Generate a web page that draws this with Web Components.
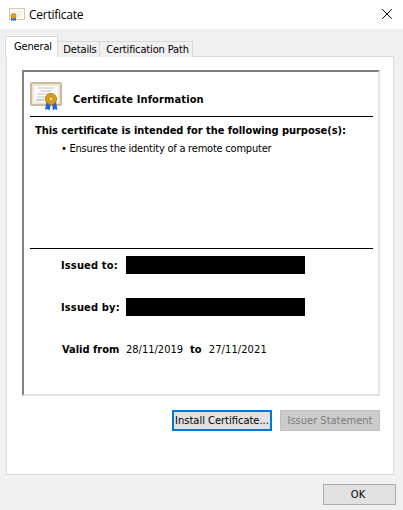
<!DOCTYPE html>
<html>
<head>
<meta charset="utf-8">
<title>Certificate</title>
<style>
    html, body { margin: 0; padding: 0; background: #fff; }
    body { font: 12px "Noto Sans", sans-serif; color: #000; }
</style>
</head>
<body>
<cert-dialog>
    <cert-title slot="title">Certificate</cert-title>
    <cert-tab slot="tabs" active style="--tab-width: 53px">General</cert-tab>
    <cert-tab slot="tabs" style="--tab-width: 43px">Details</cert-tab>
    <cert-tab slot="tabs" style="--tab-width: 94px">Certification Path</cert-tab>
    <cert-info slot="panel"></cert-info>
    <win-button slot="actions" focused>Install Certificate...</win-button>
    <win-button slot="actions" disabled>Issuer Statement</win-button>
    <win-button slot="footer" ok>OK</win-button>
</cert-dialog>

<script>
const certIcon = (w, h) => `
    <svg width="${w}" height="${h}" viewBox="0 0 32 30" fill="none">
        <rect x="1" y="1" width="30" height="22" rx="1" fill="#f7f4ec" stroke="#cdbb9b" stroke-width="2"/>
        <rect x="3" y="3" width="26" height="18" fill="#fbfaf6" stroke="#e3d8c2"/>
        <path d="M8 6h16M10 9h12M7 12h13M7 15h9" stroke="#c3c6d0"/>
        <path d="M6 18h8" stroke="#9aa0b4"/>
        <path d="M16.5 20L15 28l2.5-1 2 1.5 1.5-7zM22 21.5l1 7 2-1.5 2.5 1-1.5-8z" fill="#1f63d6"/>
        <circle cx="21" cy="17" r="5.5" fill="#dd9f1c" stroke="#b27a14"/>
        <circle cx="21" cy="17" r="2.5" fill="#f3c95c" stroke="#bd8518"/>
    </svg>`;

class CertDialog extends HTMLElement {
    constructor() {
        super();
        this.attachShadow({ mode: "open" }).innerHTML = `
        <style>
            :host { display: block; width: 403px; height: 510px; overflow: hidden; }
            .body {
                height: 481px;
                box-sizing: border-box;
                background: #f0f0f0;
                padding: 7px 9px 0 6px;
                display: flex;
                flex-direction: column;
            }
            .tabs { display: flex; align-items: flex-end; height: 21px; position: relative; z-index: 1; }
            .panel {
                height: 419px;
                margin-top: -1px;
                box-sizing: border-box;
                background: #fff;
                border: 1px solid #d9d9d9;
                padding: 13px 13px 0 15px;
                display: flex;
                flex-direction: column;
            }
            .actions { display: flex; justify-content: flex-end; gap: 8px; margin-top: 14px; }
            .footer { display: flex; justify-content: flex-end; margin: 9px -2px 0 0; }
        </style>
        <slot name="title"></slot>
        <div class="body">
            <div class="tabs"><slot name="tabs"></slot></div>
            <div class="panel">
                <slot name="panel"></slot>
                <div class="actions"><slot name="actions"></slot></div>
            </div>
            <div class="footer"><slot name="footer"></slot></div>
        </div>`;
    }
}

class CertTitle extends HTMLElement {
    constructor() {
        super();
        this.attachShadow({ mode: "open" }).innerHTML = `
        <style>
            :host {
                display: flex;
                align-items: center;
                height: 29px;
                padding: 0 11px 0 9px;
                box-sizing: border-box;
                font: 12px "Open Sans", sans-serif;
                letter-spacing: -.25px;
                color: #000;
            }
            .name { margin-left: 4px; flex: 1; }
            .close { margin-top: -1px; }
        </style>
        <svg width="16" height="16" viewBox="0 0 16 16" fill="none">
            <rect x="0.5" y="1.5" width="15" height="11" fill="#fbf9f4" stroke="#d8c7a8"/>
            <path d="M8 5h5M8 8h5" stroke="#e4e4ea"/>
            <path d="M2 10.5v3.5l1.5-1 1 1 1-1 1.5 1v-3.5z" fill="#1f63d6"/>
            <circle cx="4.5" cy="9" r="2.6" fill="#dca327" stroke="#b5811c" stroke-width=".8"/>
        </svg>
        <span class="name"><slot></slot></span>
        <svg class="close" width="10" height="10" viewBox="0 0 10 10" stroke="#000" stroke-width="1"><path d="M.3.3l9.4 9.4M9.7.3L.3 9.7"/></svg>`;
    }
}

class CertTab extends HTMLElement {
    constructor() {
        super();
        this.attachShadow({ mode: "open" }).innerHTML = `
        <style>
            :host {
                display: block;
                flex: none;
                box-sizing: border-box;
                width: var(--tab-width);
                height: 16px;
                padding-left: 3px;
                text-align: center;
                white-space: nowrap;
                background: #f0f0f0;
                border: 1px solid #d9d9d9;
                border-bottom: 0;
                margin-left: -1px;
                font: 11px/15px "DejaVu Sans Condensed", "DejaVu Sans", sans-serif;
                font-stretch: condensed;
                letter-spacing: -.15px;
            }
            :host(:first-child) { margin-left: 0; }
            :host([active]) {
                height: 21px;
                line-height: 19px;
                background: #fff;
                position: relative;
                z-index: 1;
            }
        </style>
        <slot></slot>`;
    }
}

class CertField extends HTMLElement {
    constructor() {
        super();
        this.attachShadow({ mode: "open" }).innerHTML = `
        <style>
            :host { display: flex; align-items: center; height: 18px; padding-left: 31px; }
            .label { width: 65px; flex: none; font: bold 11px "DejaVu Sans Condensed", "DejaVu Sans", sans-serif; font-stretch: condensed; letter-spacing: .15px; white-space: nowrap; }
            .redacted { width: 179px; height: 18px; background: #000; }
        </style>
        <span class="label"><slot name="label"></slot></span>
        <div class="redacted"></div>`;
    }
}

class CertInfo extends HTMLElement {
    constructor() {
        super();
        this.attachShadow({ mode: "open" }).innerHTML = `
        <style>
            :host {
                display: block;
                box-sizing: border-box;
                width: 358px;
                height: 326px;
                border-style: solid;
                border-width: 2px;
                border-color: #808080 #e3e3e3 #e3e3e3 #808080;
                padding: 0 5px 0 6px;
                font: 11px "DejaVu Sans Condensed", "DejaVu Sans", sans-serif;
                font-stretch: condensed;
                color: #000;
            }
            b { font-weight: bold; }
            .head { display: flex; align-items: center; height: 44px; border-bottom: 1px solid #000; }
            .head svg { margin-top: 6px; }
            .head b { margin: 11px 0 0 11px; letter-spacing: .13px; }
            .purpose { height: 132px; border-bottom: 1px solid #000; padding: 5px 0 0 5px; box-sizing: border-box; }
            .purpose p { margin: 0; }
            .purpose .title { height: 18px; line-height: 18px; letter-spacing: -.05px; white-space: nowrap; }
            .purpose .item { margin-left: 26px; line-height: 18px; letter-spacing: -.2px; word-spacing: -.1px; white-space: nowrap; }
            .fields { display: flex; flex-direction: column; gap: 24px; margin-top: 7px; }
            .valid { display: flex; align-items: center; height: 18px; padding-left: 32px; white-space: nowrap; }
            .valid b:first-child { width: 64px; flex: none; }
            .valid b:nth-child(3) { margin: 0 7px; letter-spacing: .1px; }
            .valid span:last-child { letter-spacing: .1px; }
        </style>
        <div class="head">${certIcon(32, 30)}<b>Certificate Information</b></div>
        <div class="purpose">
            <p class="title"><b>This certificate is intended for the following purpose(s):</b></p>
            <p class="item">• Ensures the identity of a remote computer</p>
        </div>
        <div class="fields">
            <cert-field><span slot="label">Issued to:</span></cert-field>
            <cert-field><span slot="label">Issued by:</span></cert-field>
            <div class="valid"><b>Valid from</b><span>28/11/2019</span><b>to</b><span>27/11/2021</span></div>
        </div>`;
    }
}

class WinButton extends HTMLElement {
    constructor() {
        super();
        this.attachShadow({ mode: "open" }).innerHTML = `
        <style>
            :host {
                display: flex;
                align-items: center;
                justify-content: center;
                box-sizing: border-box;
                width: 100px;
                height: 21px;
                background: #e1e1e1;
                border: 1px solid #adadad;
                font: 11px "DejaVu Sans Condensed", "DejaVu Sans", sans-serif;
                font-stretch: condensed;
                white-space: nowrap;
                color: #000;
            }
            :host([focused]) { border: 2px solid #0078d7; }
            :host([disabled]) { background: #cccccc; border-color: #bfbfbf; color: #7a7a7a; }
            :host([ok]) { width: 73px; padding-right: 3px; }
        </style>
        <slot></slot>`;
    }
}

customElements.define("cert-dialog", CertDialog);
customElements.define("cert-title", CertTitle);
customElements.define("cert-tab", CertTab);
customElements.define("cert-field", CertField);
customElements.define("cert-info", CertInfo);
customElements.define("win-button", WinButton);
</script>
</body>
</html>
